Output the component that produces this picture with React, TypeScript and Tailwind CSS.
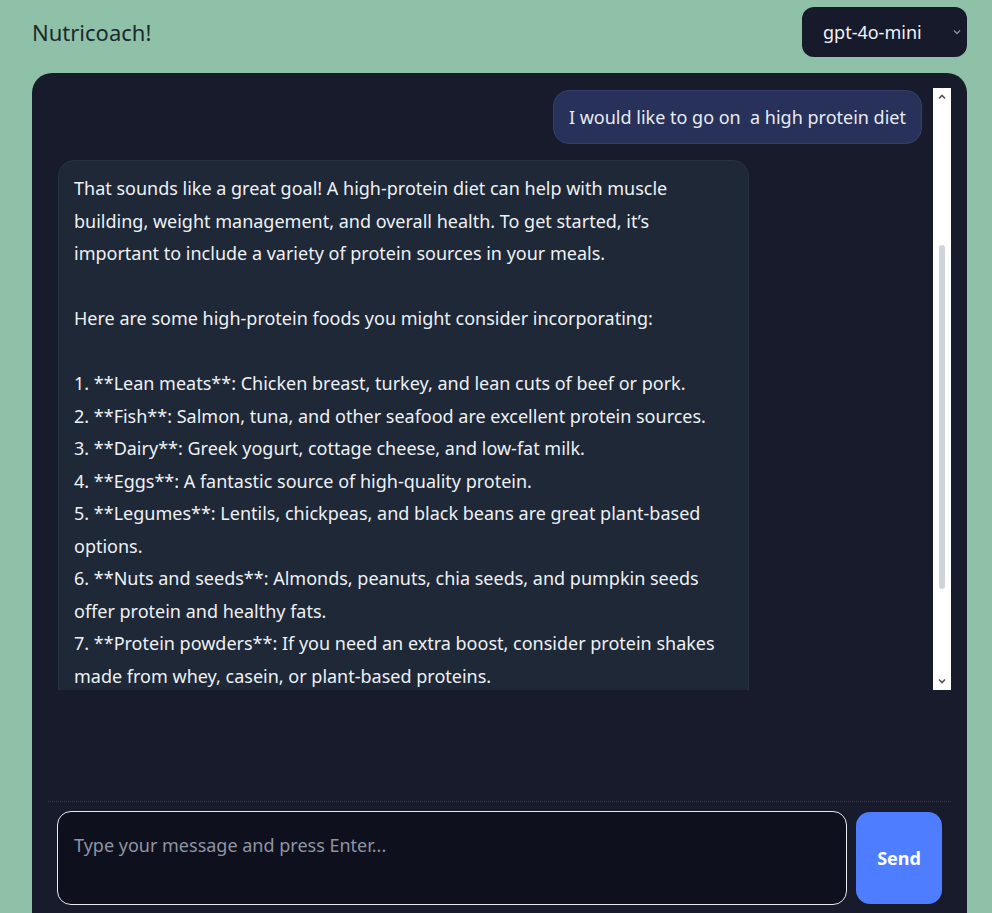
import { useEffect, useRef, useState } from 'react';

type Msg = { id: number; role: 'user' | 'assistant'; text: string };

const messages: Msg[] = [
  {
    id: 1,
    role: 'assistant',
    text: "Hi there! I'm Nutricoach, your personal nutrition assistant. I can help you plan balanced meals, understand food labels, set healthy eating goals, and find recipes that fit your lifestyle and preferences. Just tell me what you'd like to work on, and we'll get started together!",
  },
  { id: 2, role: 'user', text: 'Hi' },
  { id: 3, role: 'user', text: 'I would like to go on  a high protein diet' },
  {
    id: 4,
    role: 'assistant',
    text: `That sounds like a great goal! A high-protein diet can help with muscle building, weight management, and overall health. To get started, it’s important to include a variety of protein sources in your meals.

Here are some high-protein foods you might consider incorporating:

1. **Lean meats**: Chicken breast, turkey, and lean cuts of beef or pork.
2. **Fish**: Salmon, tuna, and other seafood are excellent protein sources.
3. **Dairy**: Greek yogurt, cottage cheese, and low-fat milk.
4. **Eggs**: A fantastic source of high-quality protein.
5. **Legumes**: Lentils, chickpeas, and black beans are great plant-based options.
6. **Nuts and seeds**: Almonds, peanuts, chia seeds, and pumpkin seeds offer protein and healthy fats.
7. **Protein powders**: If you need an extra boost, consider protein shakes made from whey, casein, or plant-based proteins.

Aim to include a source of protein in every meal and snack, and remember to drink plenty of water. Would you like help putting together a sample meal plan?`,
  },
];

const FONT = "font-['Noto_Sans',sans-serif]";
const ARROW = 17;

export default function App() {
  const [model, setModel] = useState('gpt-4o-mini');
  const [draft, setDraft] = useState('');
  const [thumb, setThumb] = useState({ top: 159, height: 340 });
  const scrollRef = useRef<HTMLDivElement>(null);
  const anchorRef = useRef<HTMLDivElement>(null);

  const updateThumb = () => {
    const box = scrollRef.current;
    if (!box) return;
    const track = box.clientHeight - ARROW * 2 - 4;
    const height = Math.max(24, (box.clientHeight / box.scrollHeight) * track);
    const max = box.scrollHeight - box.clientHeight;
    const top = ARROW + 2 + (max > 0 ? (box.scrollTop / max) * (track - height) : 0);
    setThumb({ top, height });
  };

  useEffect(() => {
    const box = scrollRef.current;
    const anchor = anchorRef.current;
    if (!box || !anchor) return;
    const offset = anchor.getBoundingClientRect().top - box.getBoundingClientRect().top;
    box.scrollTop = offset - 2;
    updateThumb();
  }, []);

  return (
    <div className={`min-h-[913px] bg-[#8fc1a9] pl-8 pr-[25px] ${FONT}`}>
      <header className="flex h-[73px] items-start justify-between">
        <h1 className="pt-[17px] text-[22px] leading-[30px] font-normal text-[#1c2a2e]">Nutricoach!</h1>
        <div className="relative mt-[7px]">
          <select
            value={model}
            onChange={(e) => setModel(e.target.value)}
            className="h-[50px] w-[165px] appearance-none rounded-xl bg-[#161a2b] pr-9 pl-[21px] text-[18px] text-[#f1f3f7] outline-none"
          >
            <option value="gpt-4o-mini">gpt-4o-mini</option>
            <option value="gpt-4o">gpt-4o</option>
          </select>
          <svg
            className="pointer-events-none absolute top-[21px] right-[5px] h-[8px] w-[10px] text-[#8b90a0]"
            viewBox="0 0 10 8"
            fill="none"
            stroke="currentColor"
            strokeWidth="1.3"
          >
            <path d="M2 2.5 5 5.5 8 2.5" />
          </svg>
        </div>
      </header>

      <main className="flex h-[840px] flex-col rounded-t-[20px] bg-[#181b2b] px-4 pt-[15px]">
        <div className="flex h-[602px]">
          <div
            ref={scrollRef}
            onScroll={updateThumb}
            className="flex-1 overflow-y-scroll [scrollbar-width:none]"
          >
            <div className="flex flex-col gap-4 pt-[2px] pr-[11px] pl-[10px]">
              {messages.map((m) =>
                m.role === 'user' ? (
                  <div key={m.id} ref={m.id === 3 ? anchorRef : undefined} className="flex justify-end">
                    <div className="rounded-2xl border border-[#343f6e] bg-[#27315a] px-[15px] py-[10px] text-[18px] leading-[32.5px] whitespace-pre-wrap text-[#e8ebf3]">
                      {m.text}
                    </div>
                  </div>
                ) : (
                  <div key={m.id} className="flex justify-start">
                    <div className="w-[691px] rounded-2xl border border-[#263142] bg-[#1e2837] px-[15px] py-[11px] text-[18px] leading-[32.5px] whitespace-pre-wrap text-[#eef1f5]">
                      {m.text}
                    </div>
                  </div>
                )
              )}
            </div>
          </div>

          {/* scrollbar */}
          <div className="relative w-[18px] shrink-0 bg-white">
            <svg className="absolute top-[5px] left-[4px] h-[8px] w-[10px] text-[#505358]" viewBox="0 0 10 8" fill="none" stroke="currentColor" strokeWidth="1.6">
              <path d="M2 5.5 5 2.5 8 5.5" />
            </svg>
            <div
              className="absolute left-[6px] w-[6px] rounded-full bg-[#cfd4db]"
              style={{ top: thumb.top, height: thumb.height }}
            />
            <svg className="absolute bottom-[5px] left-[4px] h-[8px] w-[10px] text-[#505358]" viewBox="0 0 10 8" fill="none" stroke="currentColor" strokeWidth="1.6">
              <path d="M2 2.5 5 5.5 8 2.5" />
            </svg>
          </div>
        </div>

        <div className="mt-[111px] flex gap-[9px] border-t border-dotted border-[#343a4c] px-[9px] pt-[9px]">
          <textarea
            value={draft}
            onChange={(e) => setDraft(e.target.value)}
            placeholder="Type your message and press Enter..."
            className="h-[94px] flex-1 resize-none rounded-[14px] border border-[#e9ebf0] bg-[#0e101d] px-4 py-[21px] text-[18px] leading-[24px] text-[#e5e7eb] outline-none placeholder:text-[#8e95a3]"
          />
          <button
            type="button"
            className="mt-px h-[92px] w-[86px] rounded-[14px] bg-[#4f7dff] text-[18px] font-bold text-white"
          >
            Send
          </button>
        </div>
      </main>
    </div>
  );
}
